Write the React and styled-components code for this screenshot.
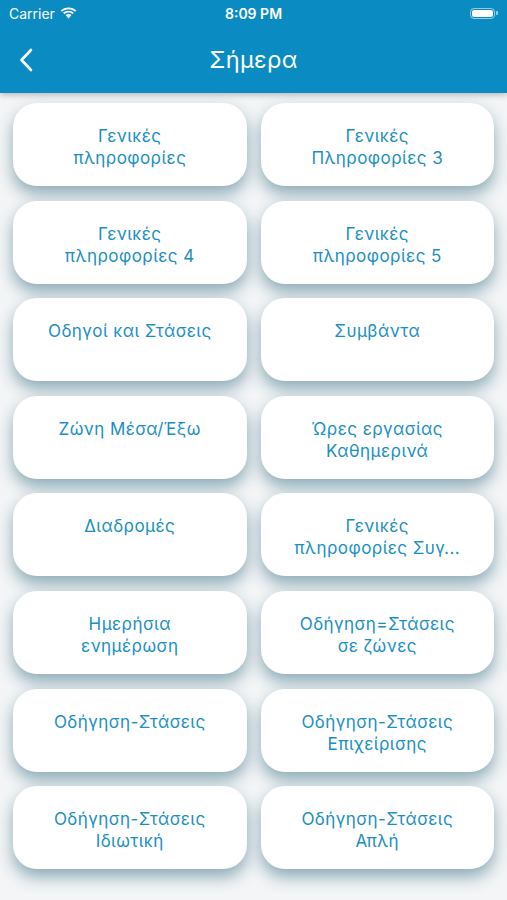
import React from "react";
import styled, { createGlobalStyle } from "styled-components";

const Global = createGlobalStyle`
  html, body { margin: 0; padding: 0; background: #f3f5f6; }
  body { font-family: Inter, "Noto Sans", "Liberation Sans", sans-serif; }
  * { box-sizing: border-box; }
`;

const Screen = styled.div`
  width: 507px;
  height: 900px;
  overflow: hidden;
  display: flex;
  flex-direction: column;
  background: #f3f5f6;
`;

const Header = styled.header`
  background: #0a8cc2;
  color: #fff;
  box-shadow: 0 2px 6px rgba(0, 0, 0, 0.25);
  position: relative;
  z-index: 2;
`;

const StatusBar = styled.div`
  height: 26px;
  display: grid;
  grid-template-columns: 1fr auto 1fr;
  align-items: center;
  padding: 0 9px;
  font-size: 14px;
`;

const Carrier = styled.div`
  display: flex;
  align-items: center;
  gap: 5px;
`;

const Time = styled.div`
  font-weight: 600;
`;

const Battery = styled.div`
  justify-self: end;
  display: flex;
  align-items: center;
  gap: 1px;
`;

const BatteryBody = styled.div`
  width: 25px;
  height: 11px;
  border: 1.5px solid rgba(255, 255, 255, 0.55);
  border-radius: 4px;
  padding: 1px;
  &::after {
    content: "";
    display: block;
    width: 100%;
    height: 100%;
    border-radius: 2px;
    background: #fff;
  }
`;

const BatteryCap = styled.div`
  width: 2px;
  height: 4px;
  border-radius: 0 1px 1px 0;
  background: rgba(255, 255, 255, 0.55);
`;

const NavBar = styled.div`
  height: 67px;
  display: grid;
  grid-template-columns: 60px 1fr 60px;
  align-items: center;
`;

const Back = styled.button`
  background: none;
  border: none;
  padding: 0 0 0 19px;
  display: flex;
  align-items: center;
  height: 100%;
  cursor: pointer;
`;

const Title = styled.h1`
  margin: 0;
  text-align: center;
  font-size: 23.5px;
  font-weight: 400;
  letter-spacing: 0.3px;
`;

const Grid = styled.main`
  display: grid;
  grid-template-columns: 1fr 1fr;
  column-gap: 14px;
  row-gap: 14.6px;
  padding: 10px 13px 0 13px;
  grid-auto-rows: 83px;
`;

const Card = styled.button`
  background: #fff;
  border: none;
  border-radius: 24px;
  box-shadow: 0 8px 16px rgba(30, 90, 115, 0.48);
  padding: 22px 8px 0;
  display: flex;
  justify-content: center;
  align-items: flex-start;
  font-family: inherit;
  cursor: pointer;
`;

const Label = styled.span`
  color: #1b8fc2;
  font-size: 17px;
  line-height: 22px;
  letter-spacing: 0.45px;
  text-align: center;
  display: -webkit-box;
  -webkit-line-clamp: 2;
  -webkit-box-orient: vertical;
  overflow: hidden;
`;

const items = [
  ["Γενικές", "πληροφορίες"],
  ["Γενικές", "Πληροφορίες 3"],
  ["Γενικές", "πληροφορίες 4"],
  ["Γενικές", "πληροφορίες 5"],
  ["Οδηγοί και Στάσεις"],
  ["Συμβάντα"],
  ["Ζώνη Μέσα/Έξω"],
  ["Ώρες εργασίας", "Καθημερινά"],
  ["Διαδρομές"],
  ["Γενικές", "πληροφορίες Συγ..."],
  ["Ημερήσια", "ενημέρωση"],
  ["Οδήγηση=Στάσεις", "σε ζώνες"],
  ["Οδήγηση-Στάσεις"],
  ["Οδήγηση-Στάσεις", "Επιχείρισης"],
  ["Οδήγηση-Στάσεις", "Ιδιωτική"],
  ["Οδήγηση-Στάσεις", "Απλή"],
];

export default function App() {
  return (
    <Screen>
      <Global />
      <Header>
        <StatusBar>
          <Carrier>
            Carrier
            <svg width="17" height="12" viewBox="0 0 17 12" fill="#fff">
              <path d="M8.5 2.2c2.5 0 4.8 1 6.5 2.6l1.3-1.3C14.3 1.6 11.5.4 8.5.4S2.7 1.6.7 3.5L2 4.8c1.7-1.6 4-2.6 6.5-2.6z" />
              <path d="M8.5 5.5c1.6 0 3 .6 4.1 1.6l1.3-1.3C12.5 4.5 10.6 3.7 8.5 3.7S4.5 4.5 3.1 5.8l1.3 1.3c1.1-1 2.5-1.6 4.1-1.6z" />
              <path d="M8.5 8.8c.7 0 1.3.3 1.8.7l-1.8 1.9-1.8-1.9c.5-.4 1.1-.7 1.8-.7z" />
              <path d="M8.5 7c1.1 0 2.1.4 2.9 1.1l-1.1 1.3c-.5-.4-1.1-.6-1.8-.6s-1.3.2-1.8.6L5.6 8.1C6.4 7.4 7.4 7 8.5 7z" />
            </svg>
          </Carrier>
          <Time>8:09 PM</Time>
          <Battery>
            <BatteryBody />
            <BatteryCap />
          </Battery>
        </StatusBar>
        <NavBar>
          <Back aria-label="Back">
            <svg width="14" height="24" viewBox="0 0 14 24" fill="none">
              <path d="M12 2L2.5 12L12 22" stroke="#fff" strokeWidth="2.6" strokeLinecap="round" strokeLinejoin="round" />
            </svg>
          </Back>
          <Title>Σήμερα</Title>
          <div />
        </NavBar>
      </Header>
      <Grid>
        {items.map((lines, i) => (
          <Card key={i}>
            <Label>
              {lines.map((l, j) => (
                <React.Fragment key={j}>
                  {j > 0 && <br />}
                  {l}
                </React.Fragment>
              ))}
            </Label>
          </Card>
        ))}
      </Grid>
    </Screen>
  );
}
